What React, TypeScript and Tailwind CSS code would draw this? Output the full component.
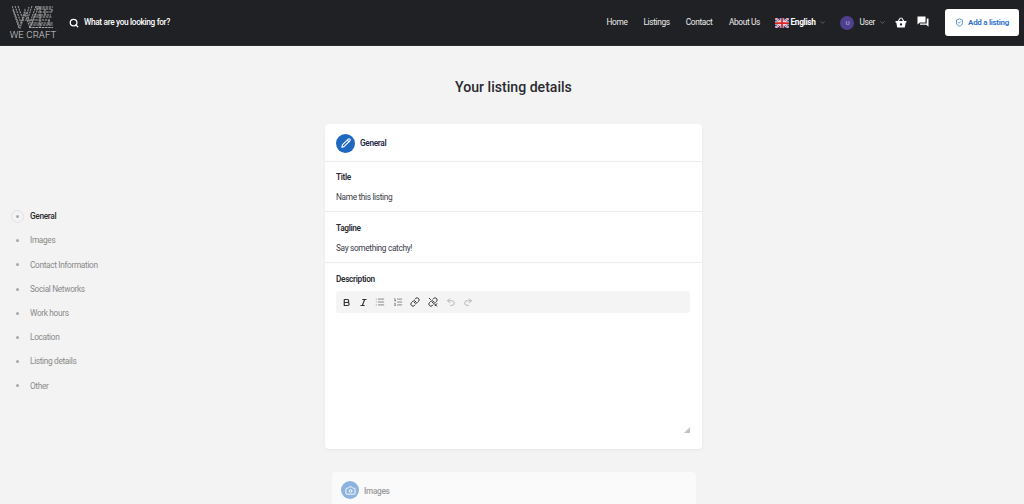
import { Search, ChevronDown, ShieldCheck, Pencil, Camera, Bold, Italic, List, ListOrdered, Link, Undo2, Redo2 } from "lucide-react";

const font = { fontFamily: "Roboto, 'Liberation Sans', sans-serif" };

function Logo() {
  return (
    <div className="flex flex-col items-center w-[46px]">
      <svg width="42" height="23" viewBox="0 0 42 23" fill="none" className="mt-[1px]">
        <g stroke="#9a9a9a" strokeWidth="1.1" strokeDasharray="2 0.8">
          <path d="M0 0 L8 22 L13 8 L18 22 L27 0" />
          <path d="M3 0 L9 17 L13 4 L18 17 L24 0 M6 0 L10 11 M15 8 L17 1" />
          <path d="M1 4 L7 22 M20 0 L16 12 M10 14 L20 14" />
        </g>
        <g stroke="#a8a8a8" strokeWidth="1.1" strokeDasharray="2.5 0.7">
          <path d="M24 1 H41 M24 3 H40 V6 H26 M22 9 H39 M21 11 H40 M20 14 H38 M19 17 H41 M18 19 H41 M17 21.5 H41" />
          <path d="M28 1 V21 M33 3 V9 M37 14 V19" />
        </g>
      </svg>
      <span className="text-[9.6px] leading-[10px] mt-[1px] tracking-[0.1px] text-[#d4d4d4] whitespace-nowrap font-light">WE CRAFT</span>
    </div>
  );
}

function Header() {
  return (
    <header className="h-[46px] bg-[#202125] border-b border-[#2c2d30] flex items-center pl-[10px] pr-[5px] shrink-0">
      <Logo />
      <div className="flex items-center gap-[5px] ml-[13px] text-white">
        <Search size={10} strokeWidth={3} />
        <span className="text-[8.3px] tracking-[-0.34px] font-medium">What are you looking for?</span>
      </div>
      <nav className="ml-auto flex items-center text-[8.3px] tracking-[-0.34px] text-[#ececec]">
        <span className="mr-[16px]">Home</span>
        <span className="mr-[16px]">Listings</span>
        <span className="mr-[16.5px]">Contact</span>
        <span className="mr-[15px]">About Us</span>
        <svg width="14" height="10" viewBox="0 0 28 20" className="mr-[1.5px]">
          <rect width="28" height="20" fill="#27408b" />
          <path d="M0 0 L28 20 M28 0 L0 20" stroke="#fff" strokeWidth="4" />
          <path d="M0 0 L28 20 M28 0 L0 20" stroke="#d22" strokeWidth="1.6" />
          <path d="M14 0 V20 M0 10 H28" stroke="#fff" strokeWidth="6" />
          <path d="M14 0 V20 M0 10 H28" stroke="#d22" strokeWidth="3.5" />
        </svg>
        <span className="font-bold text-white">English</span>
        <ChevronDown size={7} strokeWidth={3} className="ml-[4px] text-[#66686c]" />
        <span className="ml-[14px] w-[14px] h-[14px] rounded-full bg-[#4f3f8f] flex items-center justify-center text-[6px] text-[#c9c3e4]">U</span>
        <span className="ml-[5px]">User</span>
        <ChevronDown size={7} strokeWidth={3} className="ml-[4px] text-[#66686c]" />
        <svg width="12" height="11" viewBox="0 0 24 22" className="ml-[9px]" fill="#fff">
          <path d="M1 8 H23 V11 H21.5 L19.5 21 H4.5 L2.5 11 H1 Z" />
          <path d="M6 9 L11 1.5 M18 9 L13 1.5" stroke="#fff" strokeWidth="2.4" />
          <circle cx="12" cy="15" r="2.3" fill="#202125" />
        </svg>
        <svg width="12" height="11" viewBox="0 0 24 22" className="ml-[10px] mb-[2px]" fill="#fff">
          <path d="M1 1 H17 V13 H6 L1 17 Z" />
          <path d="M19.5 5 H23 V21.5 L18.5 17.5 H6 V15 H19.5 Z" />
        </svg>
        <div className="ml-[16px] w-[74px] h-[27px] bg-white rounded-[3px] flex items-center justify-center gap-[4px] text-[#2a6fc4] font-medium">
          <ShieldCheck size={9} strokeWidth={2} />
          <span className="text-[8px] tracking-[-0.3px] font-semibold">Add a listing</span>
        </div>
      </nav>
    </header>
  );
}

const steps = ["General", "Images", "Contact Information", "Social Networks", "Work hours", "Location", "Listing details", "Other"];

function Sidebar() {
  return (
    <aside className="w-[325px] shrink-0 pl-[11px] pt-[86px]">
      <ul className="flex flex-col gap-[11.2px]">
        {steps.map((s, i) => (
          <li key={s} className="flex items-center h-[13px] text-[8.3px] tracking-[-0.34px]">
            <span className={`w-[13px] h-[13px] rounded-full flex items-center justify-center ${i === 0 ? "border border-[#e2e2e2]" : ""}`}>
              <span className="w-[3px] h-[3px] rounded-full bg-[#a8a8a8]" />
            </span>
            <span className={`ml-[6px] ${i === 0 ? "text-[#2c2c2c] font-medium" : "text-[#8a8a8a]"}`}>{s}</span>
          </li>
        ))}
      </ul>
    </aside>
  );
}

function Field({ label, value, height, top }: { label: string; value: string; height: string; top: string }) {
  return (
    <div className={`${height} ${top} border-b border-[#ececec] px-[11px]`}>
      <div className="text-[8.3px] tracking-[-0.34px] font-semibold text-[#2c2c34] leading-[10px]">{label}</div>
      <div className="text-[8.3px] tracking-[-0.34px] text-[#3c3c48] leading-[10px] mt-[10px]">{value}</div>
    </div>
  );
}

function UnlinkIcon() {
  return (
    <svg width="10" height="10" viewBox="0 0 24 24" fill="none" stroke="#333" strokeWidth="2.4" strokeLinecap="round" strokeLinejoin="round">
      <path d="M10 13a5 5 0 0 0 7.54.54l3-3a5 5 0 0 0-7.07-7.07l-1.72 1.71" />
      <path d="M14 11a5 5 0 0 0-7.54-.54l-3 3a5 5 0 0 0 7.07 7.07l1.71-1.71" />
      <path d="M3 3l3 3M16 17l5 5M21 16l-4 5" />
    </svg>
  );
}

function Toolbar() {
  const cls = "text-[#333]";
  return (
    <div className="mt-[7px] h-[22px] bg-[#f4f4f4] rounded-[3px] flex items-center pl-[6px] gap-[7.6px]">
      <Bold size={9} strokeWidth={3.2} className={cls} />
      <Italic size={9} strokeWidth={3} className={cls} />
      <List size={10} strokeWidth={1.6} className="text-[#555]" />
      <ListOrdered size={10} strokeWidth={1.6} className="text-[#555]" />
      <Link size={10} strokeWidth={2.4} className={cls} />
      <UnlinkIcon />
      <Undo2 size={10} strokeWidth={1.8} className="text-[#a5a5a5]" />
      <Redo2 size={10} strokeWidth={1.8} className="text-[#a5a5a5]" />
    </div>
  );
}

function Resize() {
  return (
    <svg width="6" height="6" viewBox="0 0 6 6" className="absolute right-0 bottom-0">
      <path d="M6 0 V6 H0 Z" fill="#c4c4c4" />
    </svg>
  );
}

export default function App() {
  return (
    <div className="w-[1024px] h-[504px] overflow-hidden bg-[#f3f3f3] flex flex-col" style={font}>
      <Header />
      <h1 className="text-center text-[14.1px] font-medium text-[#2a2a30] leading-[18px] mt-[32px] pl-[3px] shrink-0">Your listing details</h1>
      <div className="flex mt-[28px] items-start">
        <Sidebar />
        <div className="w-[377px] shrink-0 flex flex-col">
          <section className="bg-white rounded-[4px] h-[325px] shadow-[0_1px_3px_rgba(0,0,0,0.06)]">
            <div className="h-[38px] border-b border-[#ececec] flex items-center px-[11px] gap-[5px] pt-[1px]">
              <span className="w-[19px] h-[19px] rounded-full bg-[#1e68c0] flex items-center justify-center">
                <Pencil size={10} strokeWidth={2.6} className="text-white" />
              </span>
              <span className="text-[8.3px] tracking-[-0.34px] font-semibold text-[#1f2b45]">General</span>
            </div>
            <Field label="Title" value="Name this listing" height="h-[50px]" top="pt-[10px]" />
            <Field label="Tagline" value="Say something catchy!" height="h-[51px]" top="pt-[11px]" />
            <div className="pr-[12px] pl-[11px] pt-[11px]">
              <div className="text-[8.3px] tracking-[-0.34px] font-semibold text-[#2c2c34] leading-[10px]">Description</div>
              <Toolbar />
              <div className="relative h-[118px] mt-[2px]">
                <Resize />
              </div>
            </div>
          </section>
          <section className="bg-[#fafafa] rounded-[4px] mt-[23px] ml-[7px] mr-[6px] h-[60px] px-[9px] pt-[9px] flex items-start gap-[5px]">
            <span className="w-[18px] h-[18px] rounded-full bg-[#8db2de] flex items-center justify-center">
              <Camera size={11} strokeWidth={2} className="text-white" />
            </span>
            <span className="text-[8.3px] tracking-[-0.34px] font-medium text-[#9a9a9a] mt-[4px]">Images</span>
          </section>
        </div>
      </div>
    </div>
  );
}
